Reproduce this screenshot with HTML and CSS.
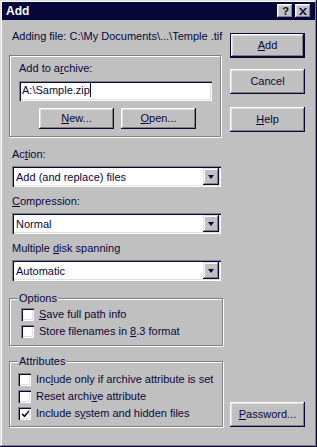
FILE: index.html
```html
<!DOCTYPE html>
<html>
<head>
<meta charset="utf-8">
<link rel="stylesheet" href="styles.css">
</head>
<body>
<div class="window">
  <div class="titlebar">
    <span class="title">Add</span>
    <div class="tbtns">
      <span class="tbtn q">?</span>
      <span class="tbtn">
        <svg width="8" height="7" viewBox="0 0 8 7"><path d="M0 0h2l2 2.5L6 0h2L5 3.5 8 7H6L4 4.5 2 7H0l3-3.5z" fill="#08083a"/></svg>
      </span>
    </div>
  </div>
  <div class="content">
    <div class="left">
      <div class="file">Adding file: C:\My Documents\...\Temple .tif</div>
      <div class="archive">
        <div class="alabel">Add to a<u>r</u>chive:</div>
        <div class="input">A:\Sample.zip<span class="caret"></span></div>
        <div class="arow">
          <span class="btn small"><u>N</u>ew...</span>
          <span class="btn small"><u>O</u>pen...</span>
        </div>
      </div>
      <div class="lbl first">Ac<u>t</u>ion:</div>
      <div class="combo"><span class="ctext">Add (and replace) files</span><span class="drop"><span class="tri"></span></span></div>
      <div class="lbl"><u>C</u>ompression:</div>
      <div class="combo"><span class="ctext">Normal</span><span class="drop"><span class="tri"></span></span></div>
      <div class="lbl">Multiple <u>d</u>isk spanning</div>
      <div class="combo"><span class="ctext">Automatic</span><span class="drop"><span class="tri"></span></span></div>
      <div class="group options">
        <span class="legend">Options</span>
        <div class="chk"><span class="box"></span><span><u>S</u>ave full path info</span></div>
        <div class="chk"><span class="box"></span><span>Store filenames in <u>8</u>.3 format</span></div>
      </div>
      <div class="group attrs">
        <span class="legend">Attributes</span>
        <div class="chk"><span class="box"></span><span>Inc<u>l</u>ude only if archive attribute is set</span></div>
        <div class="chk"><span class="box"></span><span>Reset archi<u>v</u>e attribute</span></div>
        <div class="chk"><span class="box checked"><svg width="9" height="9" viewBox="0 0 9 9"><path d="M1 3v2l2 2h1l4-5V0L3.5 5z" fill="#08083a"/></svg></span><span>Include s<u>y</u>stem and hidden files</span></div>
      </div>
    </div>
    <div class="right">
      <span class="btn default"><u>A</u>dd</span>
      <span class="btn cancel">Cancel</span>
      <span class="btn help"><u>H</u>elp</span>
      <span class="btn password"><u>P</u>assword...</span>
    </div>
  </div>
</div>
</body>
</html>
```
FILE: styles.css
```css
* { box-sizing: border-box; }
:root { --ink: #08083a; --face: #c0c0c0; --shadow: #808080; --hi: #ffffff; --light: #dfdfdf; }
body {
  margin: 0;
  background: var(--face);
  font-family: "Liberation Sans", Arial, sans-serif;
  font-size: 11px;
  line-height: 13px;
  color: var(--ink);
}
u { text-decoration: underline; text-underline-offset: 1px; }
.window {
  width: 317px;
  height: 447px;
  padding: 2px 2px 3px 2px;
  background: var(--face);
  box-shadow: inset -1px -1px 0 var(--ink), inset 1px 1px 0 var(--light), inset -2px -2px 0 var(--shadow), inset 2px 2px 0 var(--hi);
  display: flex;
  flex-direction: column;
}
.titlebar {
  height: 18px;
  background: #06063a;
  display: flex;
  align-items: center;
  justify-content: space-between;
  padding: 0 4px 0 4px;
}
.title { color: #fff; font-weight: bold; font-size: 12px; }
.tbtns { display: flex; gap: 2px; }
.tbtn {
  width: 16px; height: 14px;
  background: var(--face);
  box-shadow: inset -1px -1px 0 var(--ink), inset 1px 1px 0 var(--hi), inset -2px -2px 0 var(--shadow), inset 2px 2px 0 var(--light);
  display: flex; align-items: center; justify-content: center;
}
.tbtn.q { font-weight: bold; font-size: 11px; line-height: 11px; padding-left: 1px; }
.content {
  flex: 1;
  display: flex;
  padding: 0 0 0 7px;
  gap: 7px;
}
.left { width: 214px; display: flex; flex-direction: column; }
.file { margin-top: 10px; padding-left: 3px; white-space: nowrap; }
.archive {
  margin-top: 12px;
  width: 212px;
  height: 82px;
  padding: 6px 0 0 9px;
  border: 1px solid var(--shadow);
  box-shadow: inset 1px 1px 0 var(--hi), 1px 1px 0 var(--hi);
}
.input {
  margin-top: 6px;
  width: 193px; height: 20px;
  background: #fff;
  padding: 3px 0 0 3px;
  box-shadow: inset 1px 1px 0 var(--shadow), inset 2px 2px 0 var(--ink), inset -1px -1px 0 var(--hi), inset -2px -2px 0 var(--light);
  display: flex;
}
.caret { width: 1px; height: 14px; margin-top: -1px; background: var(--ink); }
.arow { display: flex; gap: 7px; margin-top: 7px; margin-left: 20px; }
.btn {
  display: flex; align-items: center; justify-content: center;
  width: 75px; height: 25px;
  background: var(--face);
  box-shadow: inset -1px -1px 0 var(--ink), inset 1px 1px 0 var(--hi), inset -2px -2px 0 var(--shadow), inset 2px 2px 0 var(--light);
}
.btn.small { height: 21px; }
.lbl { margin-top: 8px; padding-left: 3px; }
.lbl.first { margin-top: 11px; }
.combo {
  margin-top: 5px;
  margin-left: 3px;
  width: 209px; height: 21px;
  background: #fff;
  box-shadow: inset 1px 1px 0 var(--shadow), inset 2px 2px 0 var(--ink), inset -1px -1px 0 var(--hi), inset -2px -2px 0 var(--light);
  display: flex; align-items: center; justify-content: space-between;
  padding: 2px 2px 2px 4px;
}
.ctext { padding-top: 1px; }
.drop {
  width: 16px; height: 17px;
  background: var(--face);
  box-shadow: inset -1px -1px 0 var(--ink), inset 1px 1px 0 var(--light), inset -2px -2px 0 var(--shadow), inset 2px 2px 0 var(--hi);
  display: flex; align-items: center; justify-content: center;
}
.tri { width: 0; height: 0; border-left: 3.5px solid transparent; border-right: 3.5px solid transparent; border-top: 4px solid var(--ink); margin-left: -1px; }
.group {
  position: relative;
  width: 214px;
  border: 1px solid var(--shadow);
  box-shadow: inset 1px 1px 0 var(--hi), 1px 1px 0 var(--hi);
  display: flex; flex-direction: column; gap: 4px;
}
.legend {
  position: absolute;
  top: -7px; left: 8px;
  background: var(--face);
  padding: 0 1px;
}
.options { margin-top: 17px; height: 48px; padding: 9px 0 0 11px; }
.attrs { margin-top: 15px; height: 66px; padding: 11px 0 0 8px; }
.chk { display: flex; align-items: center; gap: 5px; height: 13px; }
.box {
  width: 13px; height: 13px;
  background: #fff;
  box-shadow: inset 1px 1px 0 var(--shadow), inset 2px 2px 0 var(--ink), inset -1px -1px 0 var(--hi), inset -2px -2px 0 var(--light);
  display: flex; align-items: center; justify-content: center;
  flex: none;
}
.box svg { margin: 1px 0 0 1px; }
.right { width: 75px; display: flex; flex-direction: column; }
.btn.default { margin-top: 13px; box-shadow: inset 0 0 0 1px var(--ink), inset -2px -2px 0 var(--ink), inset 2px 2px 0 var(--hi), inset -3px -3px 0 var(--shadow), inset 3px 3px 0 var(--light); }
.btn.cancel { margin-top: 11px; }
.btn.help { margin-top: 13px; }
.btn.password { margin-top: 270px; }
```
